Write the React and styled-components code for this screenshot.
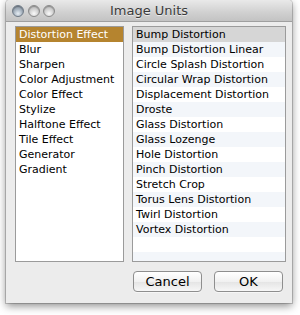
import React from "react";
import styled, { createGlobalStyle } from "styled-components";

const Global = createGlobalStyle`
  html, body { margin: 0; padding: 0; background: #ffffff; }
  body { font-family: "DejaVu Sans", "Lucida Grande", sans-serif; }
`;

const Page = styled.div`
  padding: 0 8px 12px 6px;
  width: 300px;
  height: 315px;
  box-sizing: border-box;
`;

const Window = styled.div`
  width: 286px;
  height: 303px;
  background: #ececec;
  border-radius: 4px 4px 0 0;
  box-shadow: 0 3px 8px rgba(0,0,0,0.45), 0 0 0 1px rgba(0,0,0,0.18);
  display: flex;
  flex-direction: column;
  overflow: hidden;
`;

const TitleBar = styled.div`
  height: 22px;
  flex: none;
  position: relative;
  display: flex;
  align-items: center;
  justify-content: center;
  background: linear-gradient(#e9e9e9, #d0d0d0 60%, #c3c3c3);
  border-bottom: 1px solid #9f9f9f;
  box-sizing: border-box;
`;

const Lights = styled.div`
  position: absolute;
  left: 6px;
  top: 4.5px;
  display: flex;
  gap: 3.5px;
`;

const Light = styled.span`
  width: 12px;
  height: 12px;
  border-radius: 50%;
  box-sizing: border-box;
  border: 1px solid ${p => (p.$first ? "#6f7a86" : "#8a8a8a")};
  background: ${p => p.$first
    ? "radial-gradient(circle at 50% 75%, #e6edf3 0, #aab6c2 45%, #74808c 100%)"
    : "radial-gradient(circle at 50% 75%, #fafafa 0, #d8d8d8 40%, #a9a9a9 100%)"};
  box-shadow: inset 0 1px 1px rgba(0,0,0,0.25);
`;

const Title = styled.div`
  font-size: 13px;
  color: #3a3a3a;
  text-shadow: 0 1px 0 rgba(255,255,255,0.6);
`;

const Body = styled.div`
  flex: 1;
  display: flex;
  flex-direction: column;
  padding: 4px 6px 10px 9px;
`;

const Lists = styled.div`
  display: flex;
  gap: 8px;
  height: 236px;
`;

const ListBox = styled.div`
  width: ${p => p.$w}px;
  box-sizing: border-box;
  border: 1px solid #9b9b9b;
  background: ${p => p.$striped
    ? "repeating-linear-gradient(#ffffff 0, #ffffff 15px, #f3f6fa 15px, #f3f6fa 30px)"
    : "#ffffff"};
  overflow: hidden;
`;

const Row = styled.div`
  height: 15px;
  line-height: 15px;
  padding-left: 3px;
  font-size: 11px;
  color: ${p => (p.$active ? "#ffffff" : "#000000")};
  background: ${p => (p.$active ? "#b5842f" : p.$sel ? "#d6d6d6" : "transparent")};
  white-space: nowrap;
`;

const Buttons = styled.div`
  display: flex;
  justify-content: flex-end;
  gap: 12px;
  margin-top: 9px;
  margin-right: 3px;
`;

const Button = styled.button`
  width: 69px;
  height: 21px;
  border: 1px solid #8e8e8e;
  border-radius: 4px;
  background: linear-gradient(#ffffff, #f1f1f1 50%, #e4e4e4 51%, #f7f7f7);
  font-family: "DejaVu Sans", sans-serif;
  font-size: 13px;
  color: #000;
  padding: 0;
  box-shadow: 0 1px 0 rgba(255,255,255,0.5);
`;

const categories = [
  "Distortion Effect", "Blur", "Sharpen", "Color Adjustment", "Color Effect",
  "Stylize", "Halftone Effect", "Tile Effect", "Generator", "Gradient",
];

const units = [
  "Bump Distortion", "Bump Distortion Linear", "Circle Splash Distortion",
  "Circular Wrap Distortion", "Displacement Distortion", "Droste",
  "Glass Distortion", "Glass Lozenge", "Hole Distortion", "Pinch Distortion",
  "Stretch Crop", "Torus Lens Distortion", "Twirl Distortion", "Vortex Distortion",
];

export default function App() {
  return (
    <Page>
      <Global />
      <Window>
        <TitleBar>
          <Lights><Light $first /><Light /><Light /></Lights>
          <Title>Image Units</Title>
        </TitleBar>
        <Body>
          <Lists>
            <ListBox $w={109}>
              {categories.map((c, i) => (
                <Row key={c} $active={i === 0}>{c}</Row>
              ))}
            </ListBox>
            <ListBox $w={154} $striped>
              {units.map((u, i) => (
                <Row key={u} $sel={i === 0}>{u}</Row>
              ))}
            </ListBox>
          </Lists>
          <Buttons>
            <Button>Cancel</Button>
            <Button>OK</Button>
          </Buttons>
        </Body>
      </Window>
    </Page>
  );
}
